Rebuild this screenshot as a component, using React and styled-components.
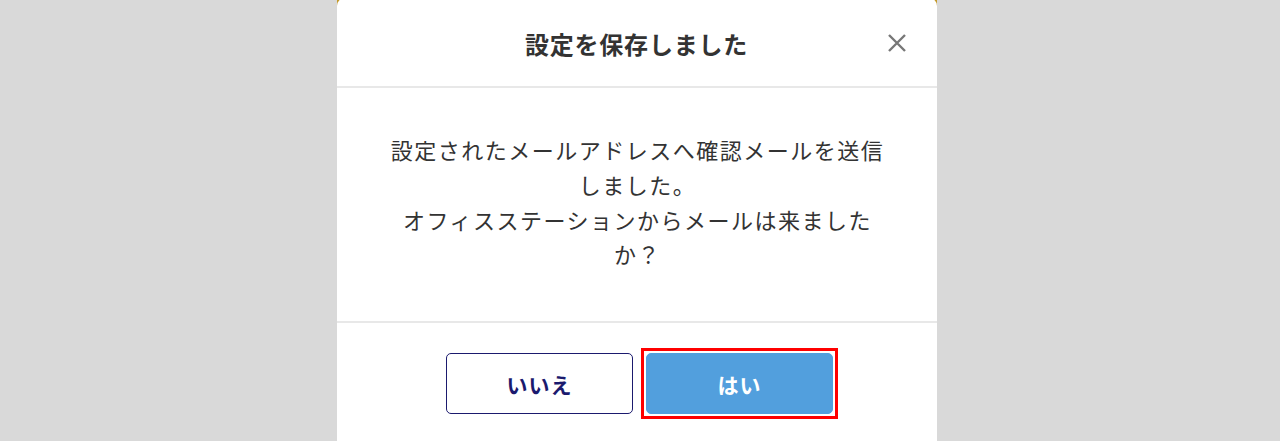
import React from "react";
import styled, { createGlobalStyle } from "styled-components";

const Global = createGlobalStyle`
  html, body { margin: 0; padding: 0; background: #d9d9d9; }
  body { font-family: "Noto Sans CJK JP", "Noto Sans", sans-serif; overflow: hidden; }
`;

const Overlay = styled.div`
  height: 441px;
  display: flex;
  justify-content: center;
  padding-right: 7px;
  overflow: hidden;
`;

const Frame = styled.div`
  width: 600px;
  margin-top: -2px;
  background: linear-gradient(#c49a2c 0 9px, transparent 9px);
  align-self: flex-start;
`;

const Modal = styled.div`
  background: #fff;
  border-radius: 8px;
  display: flex;
  flex-direction: column;
`;

const Header = styled.div`
  height: 90px;
  box-sizing: border-box;
  padding-top: 2px;
  display: flex;
  align-items: center;
  justify-content: center;
  position: relative;
  border-bottom: 2px solid #e8e8e8;
`;

const Title = styled.h2`
  margin: 0;
  font-size: 24px;
  font-weight: 700;
  color: #333;
  letter-spacing: 0.8px;
`;

const Close = styled.button`
  position: absolute;
  right: 28px;
  top: 33px;
  width: 24px;
  height: 24px;
  padding: 0;
  border: none;
  background: none;
  display: flex;
  align-items: center;
  justify-content: center;
`;

const Body = styled.div`
  height: 235px;
  box-sizing: border-box;
  padding-bottom: 6px;
  display: flex;
  align-items: center;
  justify-content: center;
  border-bottom: 2px solid #e8e8e8;
`;

const Message = styled.p`
  margin: 0;
  width: 500px;
  text-align: center;
  font-size: 22px;
  letter-spacing: 1.5px;
  line-height: 34.7px;
  color: #333;
  padding-left: 2px;
`;

const Footer = styled.div`
  display: flex;
  justify-content: center;
  gap: 13px;
  padding: 30px 0 40px 6px;
`;

const Button = styled.button`
  position: relative;
  width: 187px;
  height: 61px;
  box-sizing: border-box;
  border-radius: 5px;
  font-family: inherit;
  font-size: 21px;
  font-weight: 700;
  letter-spacing: 1px;
  cursor: pointer;
  border: 1px solid ${(p) => (p.$primary ? "#529fdd" : "#1b1a6e")};
  background: ${(p) => (p.$primary ? "#529fdd" : "#fff")};
  color: ${(p) => (p.$primary ? "#fff" : "#1b1a6e")};
  outline: none;

  &::after {
    content: "";
    display: ${(p) => (p.$highlight ? "block" : "none")};
    position: absolute;
    inset: -6px;
    border: 3px solid #f00;
    pointer-events: none;
  }
`;

export default function App() {
  return (
    <>
      <Global />
      <Overlay>
        <Frame>
          <Modal>
            <Header>
              <Title>設定を保存しました</Title>
              <Close aria-label="close">
                <svg width="20" height="20" viewBox="0 0 20 20">
                  <path d="M2 2 L18 18 M18 2 L2 18" stroke="#777" strokeWidth="2.4" fill="none" />
                </svg>
              </Close>
            </Header>
            <Body>
              <Message>
                設定されたメールアドレスへ確認メールを送信しました。
                <br />
                オフィスステーションからメールは来ましたか？
              </Message>
            </Body>
            <Footer>
              <Button>いいえ</Button>
              <Button $primary $highlight>はい</Button>
            </Footer>
          </Modal>
        </Frame>
      </Overlay>
    </>
  );
}
